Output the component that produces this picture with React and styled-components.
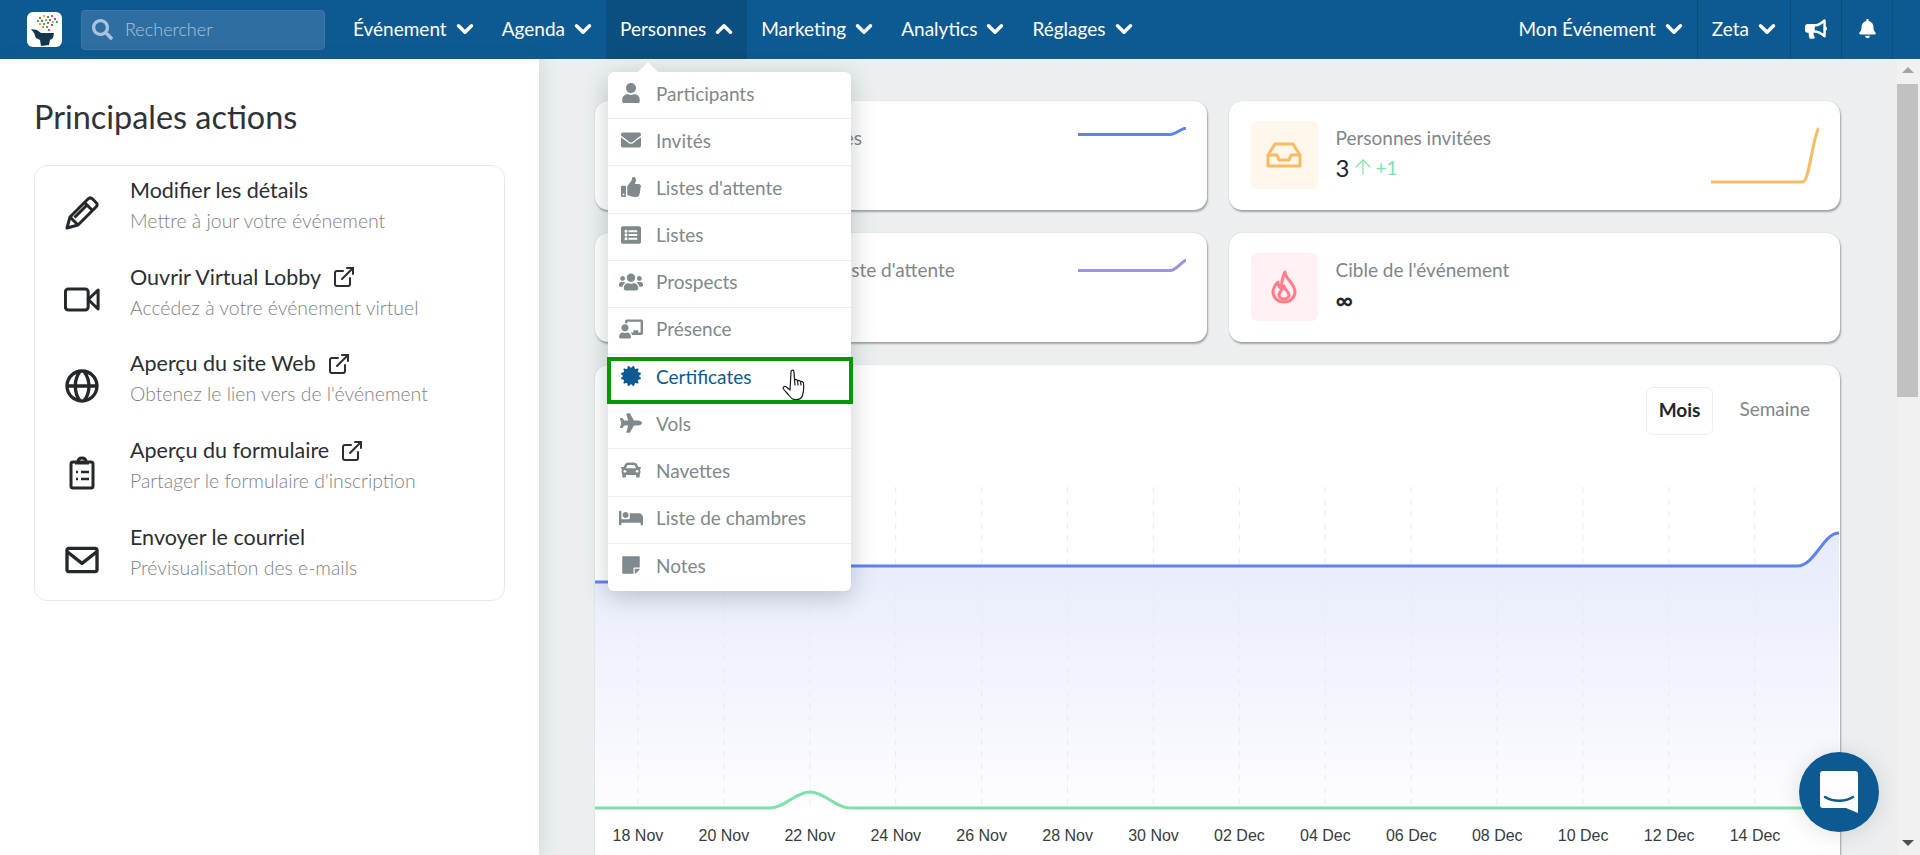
import React from "react";
import styled, { createGlobalStyle } from "styled-components";
import {
  FaUser,
  FaEnvelope,
  FaThumbsUp,
  FaListAlt,
  FaUsers,
  FaChalkboardTeacher,
  FaCertificate,
  FaPlane,
  FaCar,
  FaBed,
  FaStickyNote,
  FaBullhorn,
  FaBell,
  FaSearch,
} from "react-icons/fa";
import { BiGlobe, BiEnvelope } from "react-icons/bi";
import { LuChevronDown, LuChevronUp, LuArrowUp, LuExternalLink } from "react-icons/lu";

const GlobalStyle = createGlobalStyle`
  html, body { margin: 0; height: 100%; overflow: hidden; }
  body { font-family: Lato, "Noto Sans", sans-serif; background: #fff; }
  * { box-sizing: border-box; }
`;

const Page = styled.div`
  height: 100vh;
  display: flex;
  flex-direction: column;
`;

const Nav = styled.header`
  height: 59px;
  flex: none;
  display: flex;
  align-items: stretch;
  padding: 0 27px 0 27px;
  background: #0d5a92;
  color: #fff;
`;

const LogoBox = styled.div`
  width: 35px;
  height: 35px;
  margin-top: 12px;
  background: #fff;
  border-radius: 6px;
  overflow: hidden;
`;

const Search = styled.div`
  width: 244px;
  height: 40px;
  margin: 10px 14px 0 19px;
  padding: 0 0 2px 10px;
  display: flex;
  align-items: center;
  gap: 12px;
  background: #2f6ea1;
  border: 1px solid #3d78a8;
  border-radius: 4px;
  color: #a9c4da;
  font-size: 18px;
  font-weight: 300;
  svg { font-size: 21px; }
`;

const NavItem = styled.div`
  position: relative;
  display: flex;
  align-items: center;
  gap: 5px;
  padding: 0 10px 2px 14px;
  font-size: 19px;
  white-space: nowrap;
  background: ${(p) => (p.$open ? "#0b4e80" : "transparent")};
  border-right: ${(p) => (p.$line ? "1px solid #0b4e80" : "0")};
  svg { flex: none; }
`;

const NavIconItem = styled(NavItem)`
  width: 51px;
  padding: 0 0 2px;
  justify-content: center;
`;

const NavGap = styled.div`
  flex: 1;
`;

const Menu = styled.div`
  position: absolute;
  top: 72px;
  left: 2px;
  z-index: 5;
  width: 243px;
  color: #80898b;
  background: #fff;
  border-radius: 6px;
  box-shadow: 0 6px 24px rgba(40, 50, 60, 0.25);
  &::before {
    content: "";
    position: absolute;
    top: -10px;
    left: 30px;
    border: 10px solid transparent;
    border-top: 0;
    border-bottom-color: #fff;
  }
`;

const MenuRow = styled.div`
  position: relative;
  height: 47.18px;
  padding: 0 0 4px 48px;
  display: flex;
  align-items: center;
  font-size: 19px;
  color: ${(p) => (p.$active ? "#0d5a92" : "#80898b")};
  border-bottom: ${(p) => (p.$last ? "0" : "1px solid #eceef0")};
  svg { flex: none; }
  ${(p) =>
    p.$active &&
    `&::after {
      content: "";
      position: absolute;
      left: -1px;
      right: -2px;
      top: 2px;
      bottom: -3px;
      border: 4px solid #009a00;
    }`}
`;

const MenuIcon = styled.span`
  position: absolute;
  left: 11px;
  top: 0;
  bottom: 4px;
  width: 24px;
  display: flex;
  align-items: center;
  justify-content: center;
  font-size: 20px;
`;

const HandMark = styled.svg`
  position: absolute;
  left: 174px;
  top: 14px;
  z-index: 2;
`;

const Body = styled.div`
  flex: 1;
  min-height: 0;
  display: flex;
`;

const Side = styled.aside`
  width: 539px;
  flex: none;
  padding: 37px 34px 0 34px;
  background: #fff;
  box-shadow: 4px 0 16px rgba(60, 70, 80, 0.12);
  position: relative;
`;

const Heading = styled.h2`
  margin: 0 0 28px;
  height: 41px;
  line-height: 41px;
  font-size: 32.4px;
  font-weight: 400;
  color: #2f3337;
`;

const ActionCard = styled.div`
  height: 436px;
  padding-top: 9px;
  border: 1px solid #e6e9eb;
  border-radius: 13px;
`;

const ActionRow = styled.div`
  height: 86.7px;
  padding-left: 95px;
  position: relative;
`;

const ActionIcon = styled.span`
  position: absolute;
  left: 23px;
  top: 14px;
  width: 48px;
  height: 48px;
  display: flex;
  align-items: center;
  justify-content: center;
  color: #25282b;
  font-size: 40px;
`;

const ActionTitle = styled.div`
  height: 31px;
  line-height: 31px;
  display: flex;
  align-items: center;
  gap: 11px;
  font-size: 21.5px;
  color: #2b2f33;
`;

const ActionSub = styled.div`
  margin-top: 1px;
  line-height: 28px;
  font-size: 19.4px;
  font-weight: 300;
  color: #7d8286;
`;

const Main = styled.main`
  flex: 1;
  min-width: 0;
  overflow: hidden;
  padding: 42px 57px 0 56px;
  background: #ebeff0;
`;

const StatGrid = styled.div`
  display: grid;
  grid-template-columns: 1fr 1fr;
  grid-auto-rows: 109px;
  gap: 23px 22px;
`;

const Card = styled.div`
  background: #fff;
  border-radius: 13px;
  box-shadow: 0 0 1px rgba(0, 0, 0, 0.25), 1px 2px 2px rgba(0, 0, 0, 0.3);
`;

const StatCard = styled(Card)`
  position: relative;
  display: flex;
  align-items: flex-start;
  padding: 20px 22px;
`;

const Tile = styled.div`
  width: 67px;
  height: 68px;
  flex: none;
  margin-right: 18px;
  display: flex;
  align-items: center;
  justify-content: center;
  border-radius: 6px;
  background: ${(p) => p.$bg};
`;

const StatLabel = styled.div`
  margin-top: 4px;
  line-height: 26px;
  font-size: 19px;
  color: #80868b;
`;

const StatValue = styled.div`
  display: flex;
  align-items: center;
  height: 32px;
  font-size: 24px;
  font-weight: ${(p) => (p.$strong ? 700 : 400)};
  color: #22262a;
`;

const Gain = styled.span`
  display: flex;
  align-items: center;
  margin-left: 2px;
  font-size: 19px;
  color: #7ee2a8;
`;

const Spark = styled.svg`
  position: absolute;
  right: 21px;
  top: 26px;
`;

const ChartCard = styled(Card)`
  margin-top: 23px;
  height: 520px;
`;

const ChartHead = styled.div`
  height: 122px;
  padding: 22px 30px 0 0;
  display: flex;
  justify-content: flex-end;
  align-items: flex-start;
  gap: 26px;
`;

const RangeButton = styled.div`
  height: 48px;
  line-height: 44px;
  padding: 0 ${(p) => (p.$on ? "12px" : "0")};
  font-size: 19px;
  font-weight: ${(p) => (p.$on ? 700 : 400)};
  color: ${(p) => (p.$on ? "#22262a" : "#80868b")};
  border: ${(p) => (p.$on ? "1px solid #eceef0" : "0")};
  border-radius: 6px;
`;

const ChartSvg = styled.svg`
  display: block;
  overflow: visible;
`;

const AxisRow = styled.div`
  width: 1203px;
  margin-top: 19px;
  display: grid;
  grid-template-columns: repeat(14, 1fr);
  font-family: "Liberation Sans", Arial, sans-serif;
  font-size: 16px;
  color: #373d3f;
  text-align: center;
  white-space: nowrap;
`;

const Track = styled.div`
  width: 23px;
  flex: none;
  position: relative;
  background: #f1f1f1;
`;

const Thumb = styled.div`
  position: absolute;
  top: 25px;
  left: 0;
  right: 2px;
  height: 313px;
  background: #c1c1c1;
`;

const ScrollArrow = styled.div`
  position: absolute;
  left: 5px;
  ${(p) => (p.$down ? "bottom: 9px;" : "top: 8px;")}
  border: 6px solid transparent;
  ${(p) => (p.$down ? "border-bottom: 0; border-top: 6px solid #505050;" : "border-top: 0; border-bottom: 6px solid #a3a3a3;")}
`;

const ChatButton = styled.div`
  position: fixed;
  left: 1799px;
  top: 752px;
  z-index: 6;
  width: 80px;
  height: 80px;
  border-radius: 50%;
  background: #0d5a92;
  display: flex;
  align-items: center;
  justify-content: center;
  box-shadow: 0 2px 24px rgba(0, 0, 0, 0.12);
`;

function Pencil() {
  return (
    <svg width="34" height="34" viewBox="0 0 34 34" fill="none" stroke="currentColor" strokeWidth="3" strokeLinejoin="round">
      <path d="M2 32l3-11L23 3c1.500-1.500 3-1.500 4.500 0l3.500 3.500c1.500 1.500 1.500 3 0 4.500L13 29z" />
      <path d="M5 21l8 8M19.500 6.500l8 8M9.500 21.500l12-12" />
    </svg>
  );
}

function Camera() {
  return (
    <svg width="36" height="25" viewBox="0 0 38 26" fill="none" stroke="currentColor" strokeWidth="3.200" strokeLinejoin="round">
      <rect x="1.500" y="2" width="24" height="22" rx="3" />
      <path d="M25.500 13L36 3v20z" />
    </svg>
  );
}

function Clipboard() {
  return (
    <svg width="26" height="34" viewBox="0 0 26 34" fill="none" stroke="currentColor" strokeWidth="3" strokeLinejoin="round">
      <rect x="2" y="6" width="22" height="26" rx="2" />
      <path d="M9 6c0-3 1.500-4 4-4s4 1 4 4" />
      <path d="M6 7h14" />
      <path d="M7 16h2M12 16h8M7 23h2M12 23h8" strokeWidth="2.400" />
    </svg>
  );
}

const people = [
  ["Participants", <FaUser />],
  ["Invités", <FaEnvelope />],
  ["Listes d'attente", <FaThumbsUp />],
  ["Listes", <FaListAlt />],
  ["Prospects", <FaUsers size={24} />],
  ["Présence", <FaChalkboardTeacher size={24} />],
  ["Certificates", <FaCertificate />],
  ["Vols", <FaPlane size={22} />],
  ["Navettes", <FaCar />],
  ["Liste de chambres", <FaBed size={24} />],
  ["Notes", <FaStickyNote />],
];

const actions = [
  { title: "Modifier les détails", sub: "Mettre à jour votre événement", icon: <Pencil /> },
  { title: "Ouvrir Virtual Lobby", sub: "Accédez à votre événement virtuel", icon: <Camera />, link: true },
  { title: "Aperçu du site Web", sub: "Obtenez le lien vers de l'événement", icon: <BiGlobe />, link: true },
  { title: "Aperçu du formulaire", sub: "Partager le formulaire d'inscription", icon: <Clipboard />, link: true },
  { title: "Envoyer le courriel", sub: "Prévisualisation des e-mails", icon: <BiEnvelope /> },
];

const days = ["18 Nov", "20 Nov", "22 Nov", "24 Nov", "26 Nov", "28 Nov", "30 Nov", "02 Dec", "04 Dec", "06 Dec", "08 Dec", "10 Dec", "12 Dec", "14 Dec"];

function Logo() {
  const dots = [
    [12, 5, "#e2574c"], [16, 3, "#f2b134"], [20, 4, "#3aa776"], [24, 3, "#e2574c"], [27, 6, "#2f80c2"],
    [10, 8, "#3aa776"], [14, 8, "#2f80c2"], [18, 7, "#e88b3a"], [22, 7, "#8e5fb5"], [25, 9, "#f2b134"], [29, 9, "#3aa776"],
    [12, 11, "#f2b134"], [16, 11, "#3aa776"], [20, 10, "#e2574c"], [24, 12, "#2f80c2"], [15, 14, "#e88b3a"], [19, 14, "#3aa776"], [21, 17, "#e2574c"],
  ];
  return (
    <svg width="35" height="35" viewBox="0 0 35 35">
      {dots.map(([x, y, c], i) => (
        <rect key={i} x={x} y={y} width="2" height="2" fill={c} />
      ))}
      <path d="M4 17l6 1 4 3h13l-1 5-3 2-1 5-8 1-1-6-4-2-2-5z" fill="#12384f" />
    </svg>
  );
}

function Hand() {
  return (
    <HandMark width="28" height="32" viewBox="0 0 28 32" fill="#fff" stroke="#1a1d20" strokeWidth="1.200" strokeLinejoin="round" strokeLinecap="round">
      <path d="M9 3c0-2.500 3-2.500 3 0l.5 8c1-1 3-.5 3 1 1-1 3-.5 3 1 1-1 3-.5 3 1.500.5 5 0 9-1 12-1 3-3 4-6 4-4 0-5-1-7-3.500-2-2.500-4.500-5-6-7-1-2 1-3.500 3-2l3.500 3z" />
      <path d="M12.500 11l.5 5M15.500 12l.5 4M18.500 13l.5 3" fill="none" />
    </HandMark>
  );
}

function TrayIcon() {
  return (
    <svg width="36" height="36" viewBox="0 0 36 36" fill="none" stroke="#f7bb61" strokeWidth="3" strokeLinejoin="round">
      <path d="M2 18L9 7h18l7 11v11H2z" />
      <path d="M2 18h9l2 5h10l2-5h9" />
    </svg>
  );
}

function FlameIcon() {
  return (
    <svg width="30" height="36" viewBox="0 0 30 36" fill="none" stroke="#ff7c8a" strokeWidth="3" strokeLinejoin="round">
      <path d="M16 3c0 7 10 11 10 20a11 10 0 0 1-22 0c0-4 2-7 5-10 0 3 1 5 3 6 1-5 1-11 4-16z" />
      <path d="M15 17c0 4 5 5 5 9a5 4 0 0 1-10 0c0-3 3-5 5-9z" />
    </svg>
  );
}

function ChatIcon() {
  return (
    <svg width="40" height="44" viewBox="0 0 40 44">
      <path d="M4 1h32a3 3 0 0 1 3 3v39l-12-5H4a3 3 0 0 1-3-3V4a3 3 0 0 1 3-3z" fill="#fff" />
      <path d="M6 27c8 5 20 5 28 0" fill="none" stroke="#0d5a92" strokeWidth="2.500" strokeLinecap="round" />
    </svg>
  );
}

function Sparkline({ path, color, height }) {
  return (
    <Spark width="108" height={height} viewBox={`0 0 108 ${height}`} fill="none" stroke={color} strokeWidth="3">
      <path d={path} />
    </Spark>
  );
}

function Stat({ bg, icon, label, value, gain, spark, strong }) {
  return (
    <StatCard>
      <Tile $bg={bg}>{icon}</Tile>
      <div>
        <StatLabel>{label}</StatLabel>
        <StatValue $strong={strong}>
          {value}
          {gain && (
            <Gain>
              <LuArrowUp size={24} strokeWidth={1.2} />
              {gain}
            </Gain>
          )}
        </StatValue>
      </div>
      {spark}
    </StatCard>
  );
}

function Chart() {
  const grid = days.map((_, i) => 43 + i * 85.9);
  return (
    <ChartSvg width="1244" height="321" viewBox="0 0 1244 321">
      <defs>
        <linearGradient id="areaFill" x1="0" y1="0" x2="0" y2="1">
          <stop offset="0" stopColor="#e6eafb" />
          <stop offset="1" stopColor="#fdfdff" />
        </linearGradient>
      </defs>
      <path d="M0 95 H80 C110 95 120 79 150 79 H1202 C1220 79 1228 46 1244 46 V321 H0 Z" fill="url(#areaFill)" />
      {grid.map((x) => (
        <line key={x} x1={x} x2={x} y1="0" y2="321" stroke="#e9ebee" strokeWidth="1" strokeDasharray="6 6" />
      ))}
      <path d="M0 95 H80 C110 95 120 79 150 79 H1202 C1220 79 1228 46 1244 46" fill="none" stroke="#5f83ee" strokeWidth="3" />
      <path d="M0 321 H175 C190 321 200 305 215 305 C230 305 240 321 255 321 H1244" fill="none" stroke="#7ee2a8" strokeWidth="3" />
    </ChartSvg>
  );
}

export default function App() {
  const chevron = <LuChevronDown size={26} strokeWidth={3.2} />;
  return (
    <Page>
      <GlobalStyle />
      <Nav>
        <LogoBox>
          <Logo />
        </LogoBox>
        <Search>
          <FaSearch />
          Rechercher
        </Search>
        <NavItem>Événement {chevron}</NavItem>
        <NavItem>Agenda {chevron}</NavItem>
        <NavItem $open>
          Personnes <LuChevronUp size={26} strokeWidth={3.2} />
          <Menu>
            {people.map(([label, icon], i) => (
              <MenuRow key={label} $active={label === "Certificates"} $last={i === people.length - 1}>
                <MenuIcon>{icon}</MenuIcon>
                {label}
                {label === "Certificates" && <Hand />}
              </MenuRow>
            ))}
          </Menu>
        </NavItem>
        <NavItem>Marketing {chevron}</NavItem>
        <NavItem>Analytics {chevron}</NavItem>
        <NavItem>Réglages {chevron}</NavItem>
        <NavGap />
        <NavItem $line>Mon Événement {chevron}</NavItem>
        <NavItem $line>Zeta {chevron}</NavItem>
        <NavIconItem $line><FaBullhorn size={22} /></NavIconItem>
        <NavIconItem $line><FaBell size={19} /></NavIconItem>
      </Nav>
      <Body>
        <Side>
          <Heading>Principales actions</Heading>
          <ActionCard>
            {actions.map((a) => (
              <ActionRow key={a.title}>
                <ActionIcon>{a.icon}</ActionIcon>
                <ActionTitle>
                  {a.title}
                  {a.link && <LuExternalLink size={24} strokeWidth={2} />}
                </ActionTitle>
                <ActionSub>{a.sub}</ActionSub>
              </ActionRow>
            ))}
          </ActionCard>
        </Side>
        <Main>
          <StatGrid>
            <Stat
              bg="#eef1fd"
              icon={<FaUser color="#5f83ee" />}
              label="Personnes inscrites"
              value="3"
              spark={<Sparkline color="#5f83ee" height={12} path="M0 7.500 H92 C98 7.500 102 2 108 1" />}
            />
            <Stat
              bg="#fff7ec"
              icon={<TrayIcon />}
              label="Personnes invitées"
              value="3"
              gain="+1"
              spark={<Sparkline color="#f7bb61" height={58} path="M0 55 H92 C98 55 102 8 108 1" />}
            />
            <Stat
              bg="#f0eefb"
              icon={<FaThumbsUp color="#9b92e0" />}
              label="Personnes sur la liste d'attente"
              value="0"
              spark={<Sparkline color="#9b92e0" height={18} path="M0 11.500 H92 C98 11.500 102 4 108 1" />}
            />
            <Stat bg="#fff1f3" icon={<FlameIcon />} label="Cible de l'événement" value="∞" strong />
          </StatGrid>
          <ChartCard>
            <ChartHead>
              <RangeButton $on>Mois</RangeButton>
              <RangeButton>Semaine</RangeButton>
            </ChartHead>
            <Chart />
            <AxisRow>
              {days.map((d) => (
                <span key={d}>{d}</span>
              ))}
            </AxisRow>
          </ChartCard>
        </Main>
        <Track>
          <ScrollArrow />
          <Thumb />
          <ScrollArrow $down />
        </Track>
      </Body>
      <ChatButton>
        <ChatIcon />
      </ChatButton>
    </Page>
  );
}
